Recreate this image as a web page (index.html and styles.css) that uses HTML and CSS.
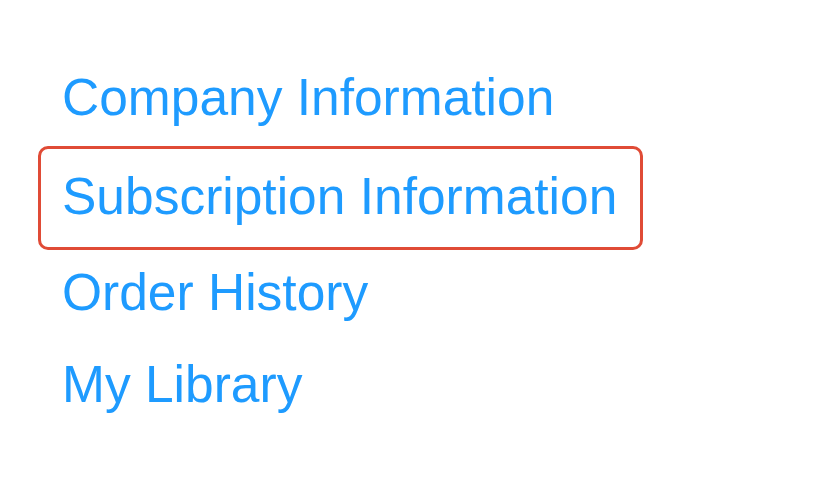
FILE: index.html
```html
<!DOCTYPE html>
<html lang="en">
<head>
<meta charset="utf-8">
<title>Account Menu</title>
<link rel="stylesheet" href="styles.css">
</head>
<body>
<nav class="menu">
  <a class="menu-item" href="#">Company Information</a>
  <a class="menu-item menu-item--active" href="#">Subscription Information</a>
  <a class="menu-item" href="#">Order History</a>
  <a class="menu-item" href="#">My Library</a>
</nav>
</body>
</html>
```
FILE: styles.css
```css
html, body {
  margin: 0;
  padding: 0;
  background: #ffffff;
}

.menu {
  display: flex;
  flex-direction: column;
  align-items: flex-start;
  padding: 51px 0 0 62px;
  font-family: "Liberation Sans", Arial, sans-serif;
  font-size: 51.5px;
}

.menu-item {
  display: block;
  color: #1e9bff;
  text-decoration: none;
  line-height: 92px;
  white-space: nowrap;
}

.menu-item--active {
  box-sizing: border-box;
  width: 605px;
  margin: 3px 0 -4px -24px;
  padding: 1px 21px 5px 21px;
  border: 3px solid #e04b36;
  border-radius: 10px;
}
```
